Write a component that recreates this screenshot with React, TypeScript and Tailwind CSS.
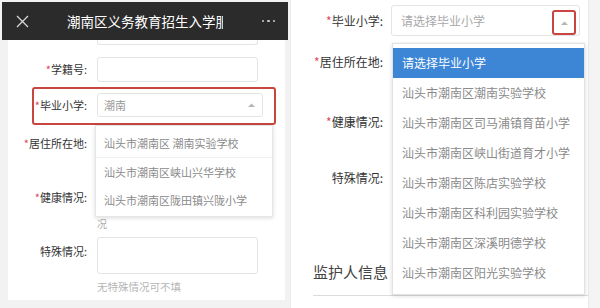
const font = { fontFamily: '"Noto Sans CJK SC", "Noto Sans", sans-serif' }

const leftOptions = ['汕头市潮南区 潮南实验学校', '汕头市潮南区峡山兴华学校', '汕头市潮南区陇田镇兴陇小学']

const rightOptions = [
  '汕头市潮南区潮南实验学校',
  '汕头市潮南区司马浦镇育苗小学',
  '汕头市潮南区峡山街道育才小学',
  '汕头市潮南区陈店实验学校',
  '汕头市潮南区科利园实验学校',
  '汕头市潮南区深溪明德学校',
  '汕头市潮南区阳光实验学校',
]

function Caret() {
  return (
    <svg width="9" height="6" viewBox="0 0 9 6">
      <path d="M1 5 L4.5 1.5 L8 5 Z" fill="#b5b5b5" />
    </svg>
  )
}

function Label({ text, req, w, size = 'text-[12px]' }: { text: string; req?: boolean; w: string; size?: string }) {
  return (
    <div className={`${w} ${size} shrink-0 text-right text-[#333] whitespace-nowrap`}>
      {req && <span className="text-[#e0475a]">*</span>}
      {text}:
    </div>
  )
}

function LeftPanel() {
  return (
    <div className="w-[290px] shrink-0 h-[308px] bg-[#f2f2f2] flex flex-col">
      <div className="mx-[2px] mt-[2px] h-[38px] bg-[#2b2b2b] flex items-center pl-[14px] pr-[13px] text-white shrink-0">
        <svg width="13" height="13" viewBox="0 0 13 13" className="shrink-0">
          <path d="M1 1 L12 12 M12 1 L1 12" stroke="#d8d8d8" strokeWidth="1.3" />
        </svg>
        <div className="ml-[38px] w-[156px] text-[13.5px] overflow-hidden whitespace-nowrap">
          潮南区义务教育招生入学服
        </div>
        <div className="flex-1" />
        <div className="flex gap-[3px] items-center">
          <span className="w-[2.5px] h-[2.5px] rounded-full bg-[#ccc]" />
          <span className="w-[2.5px] h-[2.5px] rounded-full bg-[#ccc]" />
          <span className="w-[2.5px] h-[2.5px] rounded-full bg-[#ccc]" />
        </div>
      </div>
      <div className="ml-[8px] mr-[5px] h-[260px] bg-white relative flex flex-col">
        <div className="ml-[89px] w-[161px] h-[5px] border-x border-b border-[#e4e4e4] rounded-b-[3px]" />
        <div className="flex items-center gap-[10px] mt-[12px]">
          <Label text="学籍号" req w="w-[79px]" size="text-[11px]" />
          <div className="w-[161px] h-[25px] border border-[#e4e4e4] rounded-[3px]" />
        </div>
        <div className="ml-[24px] mt-[5px] w-[244px] border-2 border-[#c9453f] rounded-[3px] pt-[4px] pb-[6px] flex items-center gap-[10px]">
          <Label text="毕业小学" req w="w-[53px]" size="text-[11px]" />
          <div className="w-[166px] h-[24px] border border-[#e4e4e4] rounded-[3px] flex items-center justify-between px-[6px]">
            <span className="text-[11px] text-[#999]">潮南</span>
            <Caret />
          </div>
        </div>
        <div className="flex items-center gap-[10px] mt-[6px] h-[25px]">
          <Label text="居住所在地" req w="w-[79px]" size="text-[11px]" />
        </div>
        <div className="flex items-center gap-[10px] mt-[29px] h-[25px]">
          <Label text="健康情况" req w="w-[79px]" size="text-[11px]" />
        </div>
        <div className="ml-[89px] w-[170px] mt-[6px] border-t border-dashed border-[#bbb]" />
        <div className="ml-[89px] text-[10px] leading-[14px] text-[#aaa]">况</div>
        <div className="flex items-start gap-[10px] mt-[6px]">
          <div className="pt-[6px]">
            <Label text="特殊情况" w="w-[79px]" size="text-[11px]" />
          </div>
          <div className="w-[161px] h-[37px] border border-[#e4e4e4] rounded-[3px]" />
        </div>
        <div className="ml-[89px] mt-[5px] text-[10.5px] text-[#b5b5b5]">无特殊情况可不填</div>

        <div className="absolute left-[87px] top-[85px] w-[178px] h-[92px] bg-white border border-[#e6e6e6] shadow-[0_1px_4px_rgba(0,0,0,0.15)] pt-[4px]">
          {leftOptions.map((o, i) => (
            <div
              key={o}
              className={`h-[28px] flex items-center px-[8px] text-[11px] text-[#8a8a8a] whitespace-nowrap ${i === 0 ? 'border-b border-[#f0f0f0]' : ''}`}
            >
              {o}
            </div>
          ))}
        </div>
      </div>
    </div>
  )
}

function RightPanel() {
  return (
    <div className="w-[300px] shrink-0 h-[308px] bg-white flex">
      <div className="w-[288px] shrink-0 relative flex flex-col pt-[5px]">
        <div className="flex items-center gap-[8px] h-[31px]">
          <Label text="毕业小学" req w="w-[83px]" />
          <div className="w-[189px] h-[31px] border border-[#e4e4e4] rounded-[3px] flex items-center justify-between pl-[9px] pr-[3px] relative">
            <span className="text-[12px] text-[#a8a8a8]">请选择毕业小学</span>
            <div className="w-[24px] h-[25px] border-2 border-[#c9453f] rounded-[3px] flex items-center justify-center mt-[4px]">
              <Caret />
            </div>
          </div>
        </div>
        <div className="flex items-center h-[30px] mt-[11px]">
          <Label text="居住所在地" req w="w-[83px]" />
        </div>
        <div className="flex items-center h-[30px] mt-[30px]">
          <Label text="健康情况" req w="w-[83px]" />
        </div>
        <div className="flex items-center h-[30px] mt-[26px]">
          <Label text="特殊情况" w="w-[83px]" />
        </div>
        <div className="ml-[13px] mt-[65px] h-[38px] pb-[8px] flex items-center border-b border-[#dcdcdc] text-[15px] text-[#444]">
          监护人信息
        </div>

        <div className="absolute left-[92px] top-[43px] w-[193px] h-[252px] bg-white border border-[#e2e2e2] shadow-[0_1px_4px_rgba(0,0,0,0.15)] pt-[4px]">
          <div className="h-[30px] bg-[#3d86d6] flex items-center px-[9px] text-[12px] text-white">请选择毕业小学</div>
          {rightOptions.map((o) => (
            <div key={o} className="h-[30px] flex items-center px-[9px] text-[12px] text-[#8a8a8a] whitespace-nowrap">
              {o}
            </div>
          ))}
        </div>
      </div>
      <div className="flex-1 bg-[#f4f4f4] border-l border-[#e8e8e8]" />
    </div>
  )
}

export default function App() {
  return (
    <div className="w-[600px] h-[308px] flex bg-white overflow-hidden" style={font}>
      <LeftPanel />
      <div className="w-[10px] shrink-0 h-[308px] bg-white border-l border-[#eee]" />
      <RightPanel />
    </div>
  )
}
